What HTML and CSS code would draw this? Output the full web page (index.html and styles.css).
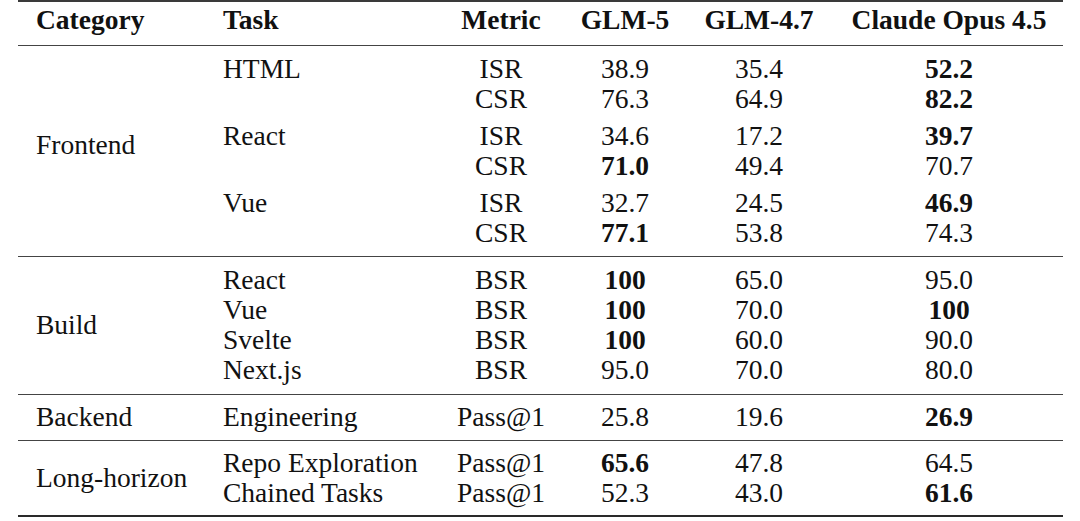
FILE: index.html
```html
<!DOCTYPE html>
<html lang="en">
<head>
<meta charset="utf-8">
<title>Frontend, Build, Backend and Long-horizon results</title>
<link rel="stylesheet" href="styles.css">
</head>
<body>
<div class="page">
<table class="results">
  <colgroup>
    <col class="c-cat">
    <col class="c-task">
    <col class="c-metric">
    <col class="c-glm5">
    <col class="c-glm47">
    <col class="c-claude">
  </colgroup>
  <thead>
    <tr>
      <th class="cat">Category</th>
      <th class="task">Task</th>
      <th class="num">Metric</th>
      <th class="num">GLM-5</th>
      <th class="num">GLM-4.7</th>
      <th class="num claude">Claude Opus 4.5</th>
    </tr>
  </thead>
  <tbody class="group frontend">
    <tr class="first">
      <td class="cat" rowspan="6">Frontend</td>
      <td class="task">HTML</td>
      <td class="num">ISR</td>
      <td class="num">38.9</td>
      <td class="num">35.4</td>
      <td class="num claude best">52.2</td>
    </tr>
    <tr>
      <td class="task"></td>
      <td class="num">CSR</td>
      <td class="num">76.3</td>
      <td class="num">64.9</td>
      <td class="num claude best">82.2</td>
    </tr>
    <tr class="pair">
      <td class="task">React</td>
      <td class="num">ISR</td>
      <td class="num">34.6</td>
      <td class="num">17.2</td>
      <td class="num claude best">39.7</td>
    </tr>
    <tr>
      <td class="task"></td>
      <td class="num">CSR</td>
      <td class="num best">71.0</td>
      <td class="num">49.4</td>
      <td class="num claude">70.7</td>
    </tr>
    <tr class="pair">
      <td class="task">Vue</td>
      <td class="num">ISR</td>
      <td class="num">32.7</td>
      <td class="num">24.5</td>
      <td class="num claude best">46.9</td>
    </tr>
    <tr class="last">
      <td class="task"></td>
      <td class="num">CSR</td>
      <td class="num best">77.1</td>
      <td class="num">53.8</td>
      <td class="num claude">74.3</td>
    </tr>
  </tbody>
  <tbody class="group build">
    <tr class="first">
      <td class="cat" rowspan="4">Build</td>
      <td class="task">React</td>
      <td class="num">BSR</td>
      <td class="num best">100</td>
      <td class="num">65.0</td>
      <td class="num claude">95.0</td>
    </tr>
    <tr>
      <td class="task">Vue</td>
      <td class="num">BSR</td>
      <td class="num best">100</td>
      <td class="num">70.0</td>
      <td class="num claude best">100</td>
    </tr>
    <tr>
      <td class="task">Svelte</td>
      <td class="num">BSR</td>
      <td class="num best">100</td>
      <td class="num">60.0</td>
      <td class="num claude">90.0</td>
    </tr>
    <tr class="last">
      <td class="task">Next.js</td>
      <td class="num">BSR</td>
      <td class="num">95.0</td>
      <td class="num">70.0</td>
      <td class="num claude">80.0</td>
    </tr>
  </tbody>
  <tbody class="group backend">
    <tr class="first last">
      <td class="cat">Backend</td>
      <td class="task">Engineering</td>
      <td class="num">Pass@1</td>
      <td class="num">25.8</td>
      <td class="num">19.6</td>
      <td class="num claude best">26.9</td>
    </tr>
  </tbody>
  <tbody class="group longh">
    <tr class="first">
      <td class="cat" rowspan="2">Long-horizon</td>
      <td class="task">Repo Exploration</td>
      <td class="num">Pass@1</td>
      <td class="num best">65.6</td>
      <td class="num">47.8</td>
      <td class="num claude">64.5</td>
    </tr>
    <tr class="last">
      <td class="task">Chained Tasks</td>
      <td class="num">Pass@1</td>
      <td class="num">52.3</td>
      <td class="num">43.0</td>
      <td class="num claude best">61.6</td>
    </tr>
  </tbody>
</table>
</div>
</body>
</html>
```

FILE: styles.css
```css
html, body {
  margin: 0;
  padding: 0;
  background: #ffffff;
}

.page {
  padding: 0 17px 0 18px;
}

.results {
  width: 1045px;
  border-collapse: collapse;
  table-layout: fixed;
  font-family: "Liberation Serif", "Times New Roman", serif;
  font-size: 27.5px;
  color: #111111;
  border-top: 2px solid #3a3a3a;
  border-bottom: 2px solid #2a2a2a;
}

.c-cat { width: 205px; }
.c-task { width: 222px; }
.c-metric { width: 112px; }
.c-glm5 { width: 136px; }
.c-glm47 { width: 132px; }
.c-claude { width: 238px; }

.results th,
.results td {
  padding: 0;
  line-height: 30px;
  white-space: nowrap;
  vertical-align: middle;
}

.results th {
  font-weight: 700;
  padding-top: 3px;
  padding-bottom: 10px;
}

.results thead tr {
  border-bottom: 1px solid #444444;
}

.cat {
  text-align: left;
  padding-left: 18px !important;
}

.task {
  text-align: left;
}

.num {
  text-align: center;
}

.claude {
  padding-left: 10px !important;
}

.best {
  font-weight: 700;
}

.group {
  border-top: 1px solid #444444;
}

.results thead + .group {
  border-top: none;
}

/* vertical rhythm per group */
.frontend .first td { padding-top: 8px; }
.frontend .pair td { padding-top: 7px; }
.frontend .last td { padding-bottom: 8px; }
.frontend td.cat { padding-bottom: 20px; }

.build .first td { padding-top: 8px; }
.build .last td { padding-bottom: 9px; }
.build td.cat { padding-top: 0; padding-bottom: 2px; }

.backend .first td { padding-top: 7px; }
.backend .last td { padding-bottom: 8px; }

.longh .first td { padding-top: 7px; }
.longh .last td { padding-bottom: 7px; }
.longh td.cat { padding-top: 0; padding-bottom: 0; }
```
